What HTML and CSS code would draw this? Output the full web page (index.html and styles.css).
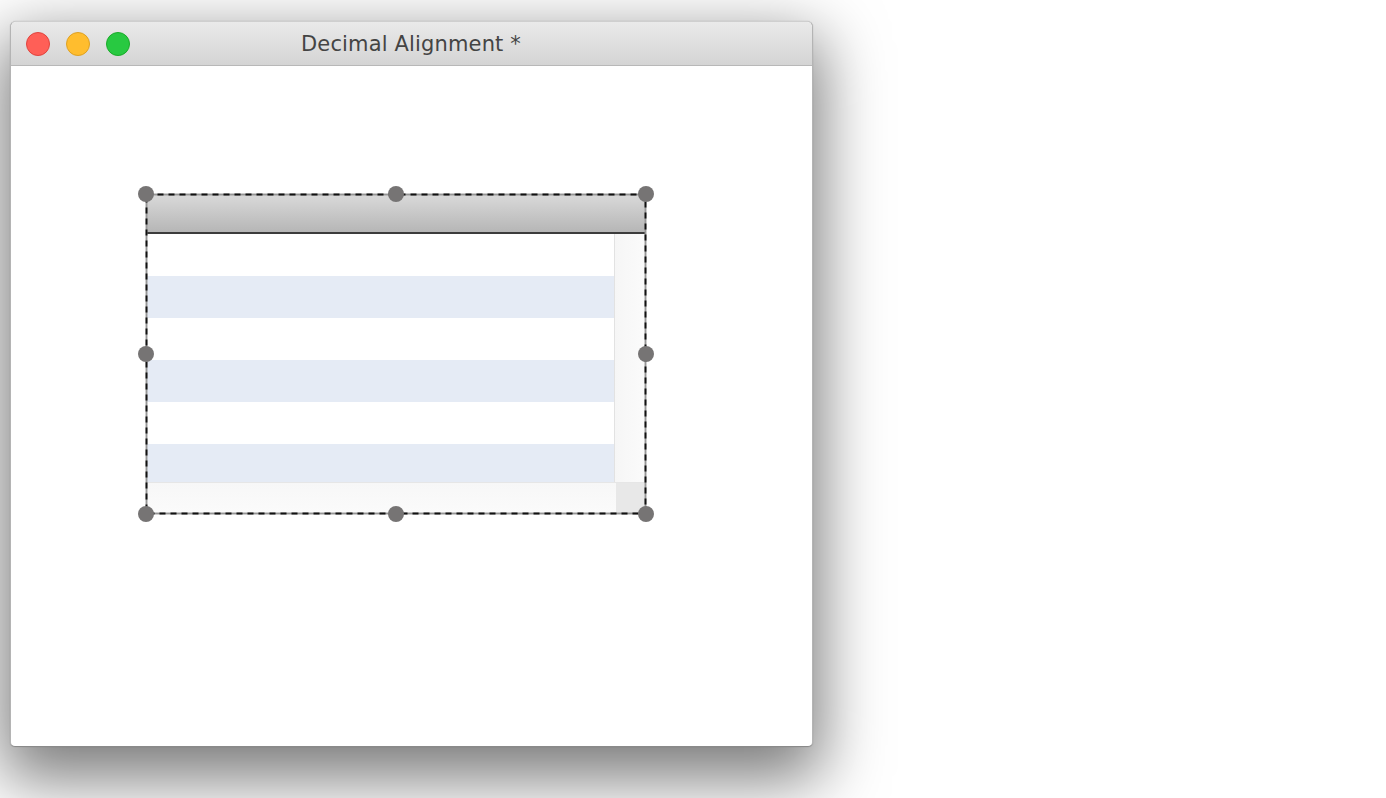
FILE: index.html
```html
<!DOCTYPE html>
<html>
<head>
<meta charset="utf-8">
<title>Decimal Alignment</title>
<link rel="stylesheet" href="styles.css">
</head>
<body>
<div class="window">
  <div class="titlebar">
    <div class="lights">
      <span class="light red"></span>
      <span class="light yellow"></span>
      <span class="light green"></span>
    </div>
    <div class="title">Decimal Alignment *</div>
  </div>
  <div class="content">
    <div class="selection">
      <div class="table">
        <div class="thead"></div>
        <div class="body-area">
          <div class="rows">
            <div class="row"></div>
            <div class="row alt"></div>
            <div class="row"></div>
            <div class="row alt"></div>
            <div class="row"></div>
            <div class="row alt"></div>
          </div>
          <div class="vscroll"></div>
        </div>
        <div class="hbar">
          <div class="hscroll"></div>
          <div class="corner"></div>
        </div>
      </div>
      <svg class="frame" width="503" height="323" viewBox="0 0 503 323">
        <rect x="1.5" y="1.5" width="499" height="319" fill="none" stroke="#959595" stroke-width="1.9"/>
        <rect x="1.5" y="1.5" width="499" height="319" fill="none" stroke="#111111" stroke-width="1.9" stroke-dasharray="6 5"/>
      </svg>
      <span class="handle h-tl"></span>
      <span class="handle h-tc"></span>
      <span class="handle h-tr"></span>
      <span class="handle h-ml"></span>
      <span class="handle h-mr"></span>
      <span class="handle h-bl"></span>
      <span class="handle h-bc"></span>
      <span class="handle h-br"></span>
    </div>
  </div>
</div>
</body>
</html>
```

FILE: styles.css
```css
html, body {
  margin: 0;
  padding: 0;
  background: #ffffff;
}
body {
  width: 1386px;
  height: 798px;
  overflow: hidden;
  padding: 21px 0 0 10px;
  box-sizing: border-box;
  font-family: "DejaVu Sans", "Liberation Sans", sans-serif;
}
.window {
  width: 803px;
  height: 726px;
  box-sizing: border-box;
  border: 1px solid #b4b4b4;
  border-top-color: #cfcfcf;
  border-bottom-color: #8a8a8a;
  border-radius: 6px 6px 5px 5px;
  background: #ffffff;
  box-shadow: 0 24px 64px 8px rgba(0, 0, 0, 0.52), 0 0 1px rgba(0,0,0,0.3);
  display: flex;
  flex-direction: column;
  overflow: hidden;
}
.titlebar {
  height: 43px;
  flex: none;
  background: linear-gradient(#eaeaea, #d4d4d4);
  border-bottom: 1px solid #b8b8b8;
  position: relative;
  display: flex;
  align-items: center;
  justify-content: center;
}
.lights {
  position: absolute;
  left: 15px;
  top: 10px;
  display: flex;
  gap: 16px;
}
.light {
  width: 24px;
  height: 24px;
  box-sizing: border-box;
  border-radius: 50%;
  display: block;
}
.red { background: #ff5f57; border: 1px solid #e0443e; }
.yellow { background: #ffbd2e; border: 1px solid #dea123; }
.green { background: #28c941; border: 1px solid #1aab29; }
.title {
  font-size: 21px;
  color: #444444;
  letter-spacing: 0.15px;
  margin-top: 1px;
  margin-left: -1px;
}
.content {
  flex: 1;
  padding: 128px 0 0 135px;
}
.selection {
  position: relative;
  width: 500px;
  height: 320px;
  box-sizing: border-box;
  padding: 1px;
}
.table {
  width: 498px;
  height: 318px;
  display: flex;
  flex-direction: column;
  background: #fff;
}
.thead {
  height: 37px;
  flex: none;
  background: linear-gradient(#d9d9d9, #b6b6b6);
  border-bottom: 2px solid #3c3c3c;
}
.body-area {
  flex: 1;
  display: flex;
  overflow: hidden;
}
.rows {
  flex: 1;
  overflow: hidden;
}
.row {
  height: 42px;
  background: #ffffff;
}
.row.alt {
  background: #e5ebf5;
}
.vscroll {
  width: 30px;
  flex: none;
  background: linear-gradient(90deg, #f6f6f6, #fbfbfb);
  border-left: 1px solid #e2e2e2;
}
.hbar {
  height: 30px;
  flex: none;
  display: flex;
  border-top: 1px solid #e6e6e6;
}
.hscroll {
  flex: 1;
  background: linear-gradient(#f7f7f7, #fbfbfb);
}
.corner {
  width: 29px;
  background: #e8e8e8;
}
.frame {
  position: absolute;
  left: -1px;
  top: -1px;
}
.handle {
  position: absolute;
  width: 16px;
  height: 16px;
  border-radius: 50%;
  background: #767474;
  margin: -8px 0 0 -8px;
}
.h-tl { left: 0; top: 0; }
.h-tc { left: 250px; top: 0; }
.h-tr { left: 500px; top: 0; }
.h-ml { left: 0; top: 160px; }
.h-mr { left: 500px; top: 160px; }
.h-bl { left: 0; top: 320px; }
.h-bc { left: 250px; top: 320px; }
.h-br { left: 500px; top: 320px; }
```
